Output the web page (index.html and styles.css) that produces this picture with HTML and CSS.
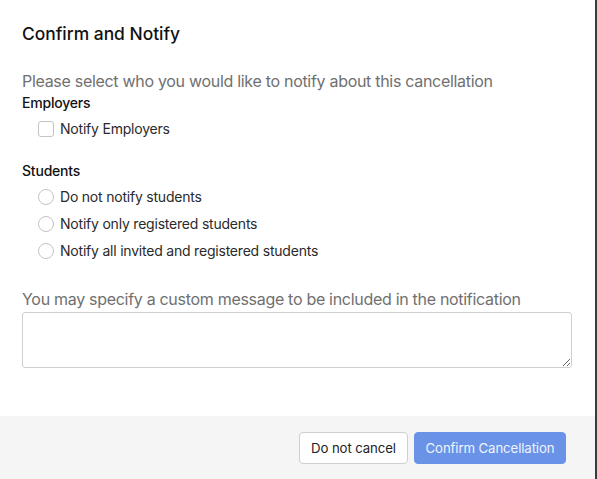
FILE: index.html
```html
<!DOCTYPE html>
<html>
<head>
<meta charset="utf-8">
<link rel="stylesheet" href="styles.css">
</head>
<body>
<div class="modal">
  <div class="modal-body">
    <h1 class="title">Confirm and Notify</h1>
    <p class="hint">Please select who you would like to notify about this cancellation</p>
    <div class="group-label">Employers</div>
    <label class="option"><span class="box"></span>Notify Employers</label>
    <div class="group-label students">Students</div>
    <div class="radios">
      <label class="option"><span class="radio"></span>Do not notify students</label>
      <label class="option"><span class="radio"></span>Notify only registered students</label>
      <label class="option"><span class="radio"></span>Notify all invited and registered students</label>
    </div>
    <p class="hint msg">You may specify a custom message to be included in the notification</p>
    <textarea class="message"></textarea>
  </div>
  <div class="footer">
    <button class="btn btn-secondary">Do not cancel</button>
    <button class="btn btn-primary">Confirm Cancellation</button>
  </div>
</div>
</body>
</html>
```
FILE: styles.css
```css
html, body {
  margin: 0;
  padding: 0;
  height: 100%;
}
body {
  background: #3b3b3b;
  font-family: Inter, "Liberation Sans", sans-serif;
  color: #1a1a1a;
}
.modal {
  width: 595px;
  height: 479px;
  background: #fff;
  display: flex;
  flex-direction: column;
}
.modal-body {
  flex: 1;
  padding: 0 22px;
  display: flex;
  flex-direction: column;
}
.title {
  margin: 23px 0 0;
  font-size: 17.4px;
  font-weight: 500;
  line-height: 22px;
  color: #111;
  letter-spacing: 0;
}
.hint {
  margin: 25px 0 0;
  font-size: 16px;
  line-height: 22px;
  color: #707070;
  letter-spacing: -0.3px;
}
.group-label {
  font-size: 14px;
  font-weight: 500;
  line-height: 20px;
  color: #111;
  margin-top: 1px;
  letter-spacing: -0.2px;
}
.students {
  margin-top: 22px;
}
.option {
  display: flex;
  align-items: center;
  gap: 6px;
  padding-left: 16px;
  font-size: 14px;
  line-height: 20px;
  color: #2a2a2a;
  margin-top: 6px;
  letter-spacing: -0.21px;
}
.radios .option {
  margin-top: 7px;
}
.radios .option:first-child {
  margin-top: 6px;
}
.box {
  width: 14px;
  height: 14px;
  border: 1px solid #c4c4c4;
  border-radius: 3px;
}
.radio {
  width: 14px;
  height: 14px;
  border: 1px solid #c4c4c4;
  border-radius: 50%;
}
.msg {
  margin-top: 27px;
}
.message {
  margin-top: 2px;
  width: 550px;
  height: 56px;
  box-sizing: border-box;
  border: 1px solid #cfcfcf;
  border-radius: 3px;
  resize: vertical;
  font-family: inherit;
}
.footer {
  height: 63px;
  background: #f5f5f5;
  display: flex;
  justify-content: flex-end;
  align-items: center;
  gap: 6px;
  padding: 0 29px 0 0;
}
.btn {
  height: 32px;
  border-radius: 4px;
  font-family: inherit;
  font-size: 13.2px;
  padding: 0;
  white-space: nowrap;
  letter-spacing: -0.1px;
}
.btn-secondary {
  width: 109px;
  background: #fff;
  border: 1px solid #cfcfcf;
  color: #222;
}
.btn-primary {
  width: 152px;
  background: #6a93e8;
  border: 1px solid #6a93e8;
  color: #eef3ff;
}
```
